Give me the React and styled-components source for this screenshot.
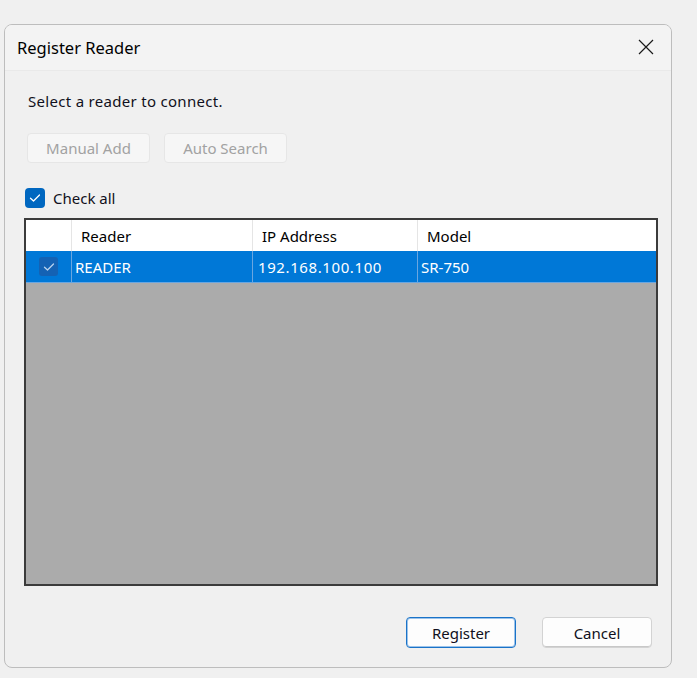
import styled, { createGlobalStyle } from 'styled-components'

const GlobalStyle = createGlobalStyle`
    html, body {
        margin: 0;
        padding: 0;
        background: #f0f0f0;
    }
    body {
        font-family: "Noto Sans", "Liberation Sans", sans-serif;
        color: #000;
    }
`

const Page = styled.div`
    width: 697px;
    height: 678px;
    padding: 24px 0 0 4px;
    box-sizing: border-box;
`

const Dialog = styled.div`
    width: 668px;
    height: 644px;
    box-sizing: border-box;
    border: 1px solid #bdbdbd;
    border-radius: 8px;
    background: #f0f0f0;
    display: flex;
    flex-direction: column;
    overflow: hidden;
`

const TitleBar = styled.div`
    height: 45px;
    flex-shrink: 0;
    background: #f3f3f3;
    border-bottom: 1px solid #e9e9e9;
    display: flex;
    align-items: center;
    justify-content: space-between;
    padding: 0 16px 0 12px;
`

const Title = styled.span`
    font-size: 16.5px;
    color: #000;
    margin-top: -1px;
`

const CloseButton = styled.button`
    width: 18px;
    height: 18px;
    padding: 0;
    border: none;
    background: transparent;
    display: flex;
    align-items: center;
    justify-content: center;
    margin-top: -1px;
`

const Body = styled.div`
    flex: 1;
    display: flex;
    flex-direction: column;
    padding: 20px 13px 19px 19px;
`

const Hint = styled.p`
    margin: 0 0 0 4px;
    font-size: 15px;
    line-height: 20px;
    letter-spacing: 0.3px;
    color: #101020;
`

const Toolbar = styled.div`
    display: flex;
    gap: 14px;
    margin: 22px 0 0 3px;
`

const ToolButton = styled.button`
    width: 123px;
    height: 30px;
    border: 1px solid #e6e6e6;
    border-radius: 4px;
    background: #f6f6f6;
    color: #a2a2a2;
    font-family: inherit;
    font-size: 15px;
    padding: 0;
`

const CheckRow = styled.label`
    display: flex;
    align-items: center;
    gap: 8px;
    margin: 25px 0 0 1px;
    font-size: 15px;
    color: #101020;
`

const CheckBox = styled.span`
    width: ${p => p.size}px;
    height: ${p => p.size}px;
    border-radius: ${p => (p.size > 19 ? 4 : 3)}px;
    background: ${p => p.bg};
    display: flex;
    align-items: center;
    justify-content: center;
    flex-shrink: 0;
`

const Table = styled.div`
    margin-top: 10px;
    height: 368px;
    box-sizing: border-box;
    border: 2px solid #3b3b3b;
    background: #ababab;
    display: flex;
    flex-direction: column;
`

const Row = styled.div`
    display: grid;
    grid-template-columns: 46px 181px 165px 1fr;
    height: 31px;
    background: ${p => (p.selected ? '#0078d7' : '#fff')};
    color: ${p => (p.selected ? '#fff' : '#000')};
    border-bottom: ${p => (p.selected ? '1px solid #6aa6e0' : 'none')};
`

const Cell = styled.div`
    display: flex;
    align-items: center;
    justify-content: ${p => (p.center ? 'center' : 'flex-start')};
    padding-left: ${p => (p.center ? 0 : p.head ? 9 : p.pad || 3)}px;
    font-size: 15px;
    border-right: 1px solid ${p => (p.head ? '#e5e5e5' : '#6aa6e0')};
    white-space: nowrap;
    overflow: hidden;
    &:last-child {
        border-right: none;
    }
`

const IpText = styled.span`
    letter-spacing: 0.6px;
`

const Footer = styled.div`
    margin-top: auto;
    display: flex;
    justify-content: flex-end;
    gap: 26px;
    padding-right: 6px;
`

const DialogButton = styled.button`
    width: 110px;
    height: 31px;
    box-sizing: border-box;
    border: 1px solid ${p => (p.primary ? '#1a73c8' : '#d3d3d3')};
    box-shadow: ${p => (p.primary ? 'inset 0 0 0 1px #9cc3ea' : 'inset 0 -1px 0 #c8c8c8')};
    border-radius: 4px;
    background: #fdfdfd;
    color: #101020;
    font-family: inherit;
    font-size: 15px;
    padding: 0;
`

function CheckMark({ color }) {
    return (
        <svg width="12" height="10" viewBox="0 0 12 10">
            <path d="M1.5 5.2 L4.5 8 L10.5 2" fill="none" stroke={color} strokeWidth="1.3" strokeLinecap="round" strokeLinejoin="round" />
        </svg>
    )
}

function CloseIcon() {
    return (
        <svg width="16" height="16" viewBox="0 0 16 16">
            <path d="M1 1 L15 15 M15 1 L1 15" stroke="#1a1a1a" strokeWidth="1.2" />
        </svg>
    )
}

const readers = [
    { name: 'READER', ip: '192.168.100.100', model: 'SR-750', checked: true },
]

export default function App() {
    return (
        <>
            <GlobalStyle />
            <Page>
                <Dialog>
                    <TitleBar>
                        <Title>Register Reader</Title>
                        <CloseButton><CloseIcon /></CloseButton>
                    </TitleBar>
                    <Body>
                        <Hint>Select a reader to connect.</Hint>
                        <Toolbar>
                            <ToolButton disabled>Manual Add</ToolButton>
                            <ToolButton disabled>Auto Search</ToolButton>
                        </Toolbar>
                        <CheckRow>
                            <CheckBox size={20} bg="#0067c0"><CheckMark color="#fff" /></CheckBox>
                            Check all
                        </CheckRow>
                        <Table>
                            <Row>
                                <Cell head></Cell>
                                <Cell head>Reader</Cell>
                                <Cell head>IP Address</Cell>
                                <Cell head>Model</Cell>
                            </Row>
                            {readers.map(r => (
                                <Row selected key={r.ip}>
                                    <Cell center>
                                        <CheckBox size={19} bg="#1462b4"><CheckMark color="#b9d2ee" /></CheckBox>
                                    </Cell>
                                    <Cell>{r.name}</Cell>
                                    <Cell pad={5}><IpText>{r.ip}</IpText></Cell>
                                    <Cell>{r.model}</Cell>
                                </Row>
                            ))}
                        </Table>
                        <Footer>
                            <DialogButton primary>Register</DialogButton>
                            <DialogButton>Cancel</DialogButton>
                        </Footer>
                    </Body>
                </Dialog>
            </Page>
        </>
    )
}
